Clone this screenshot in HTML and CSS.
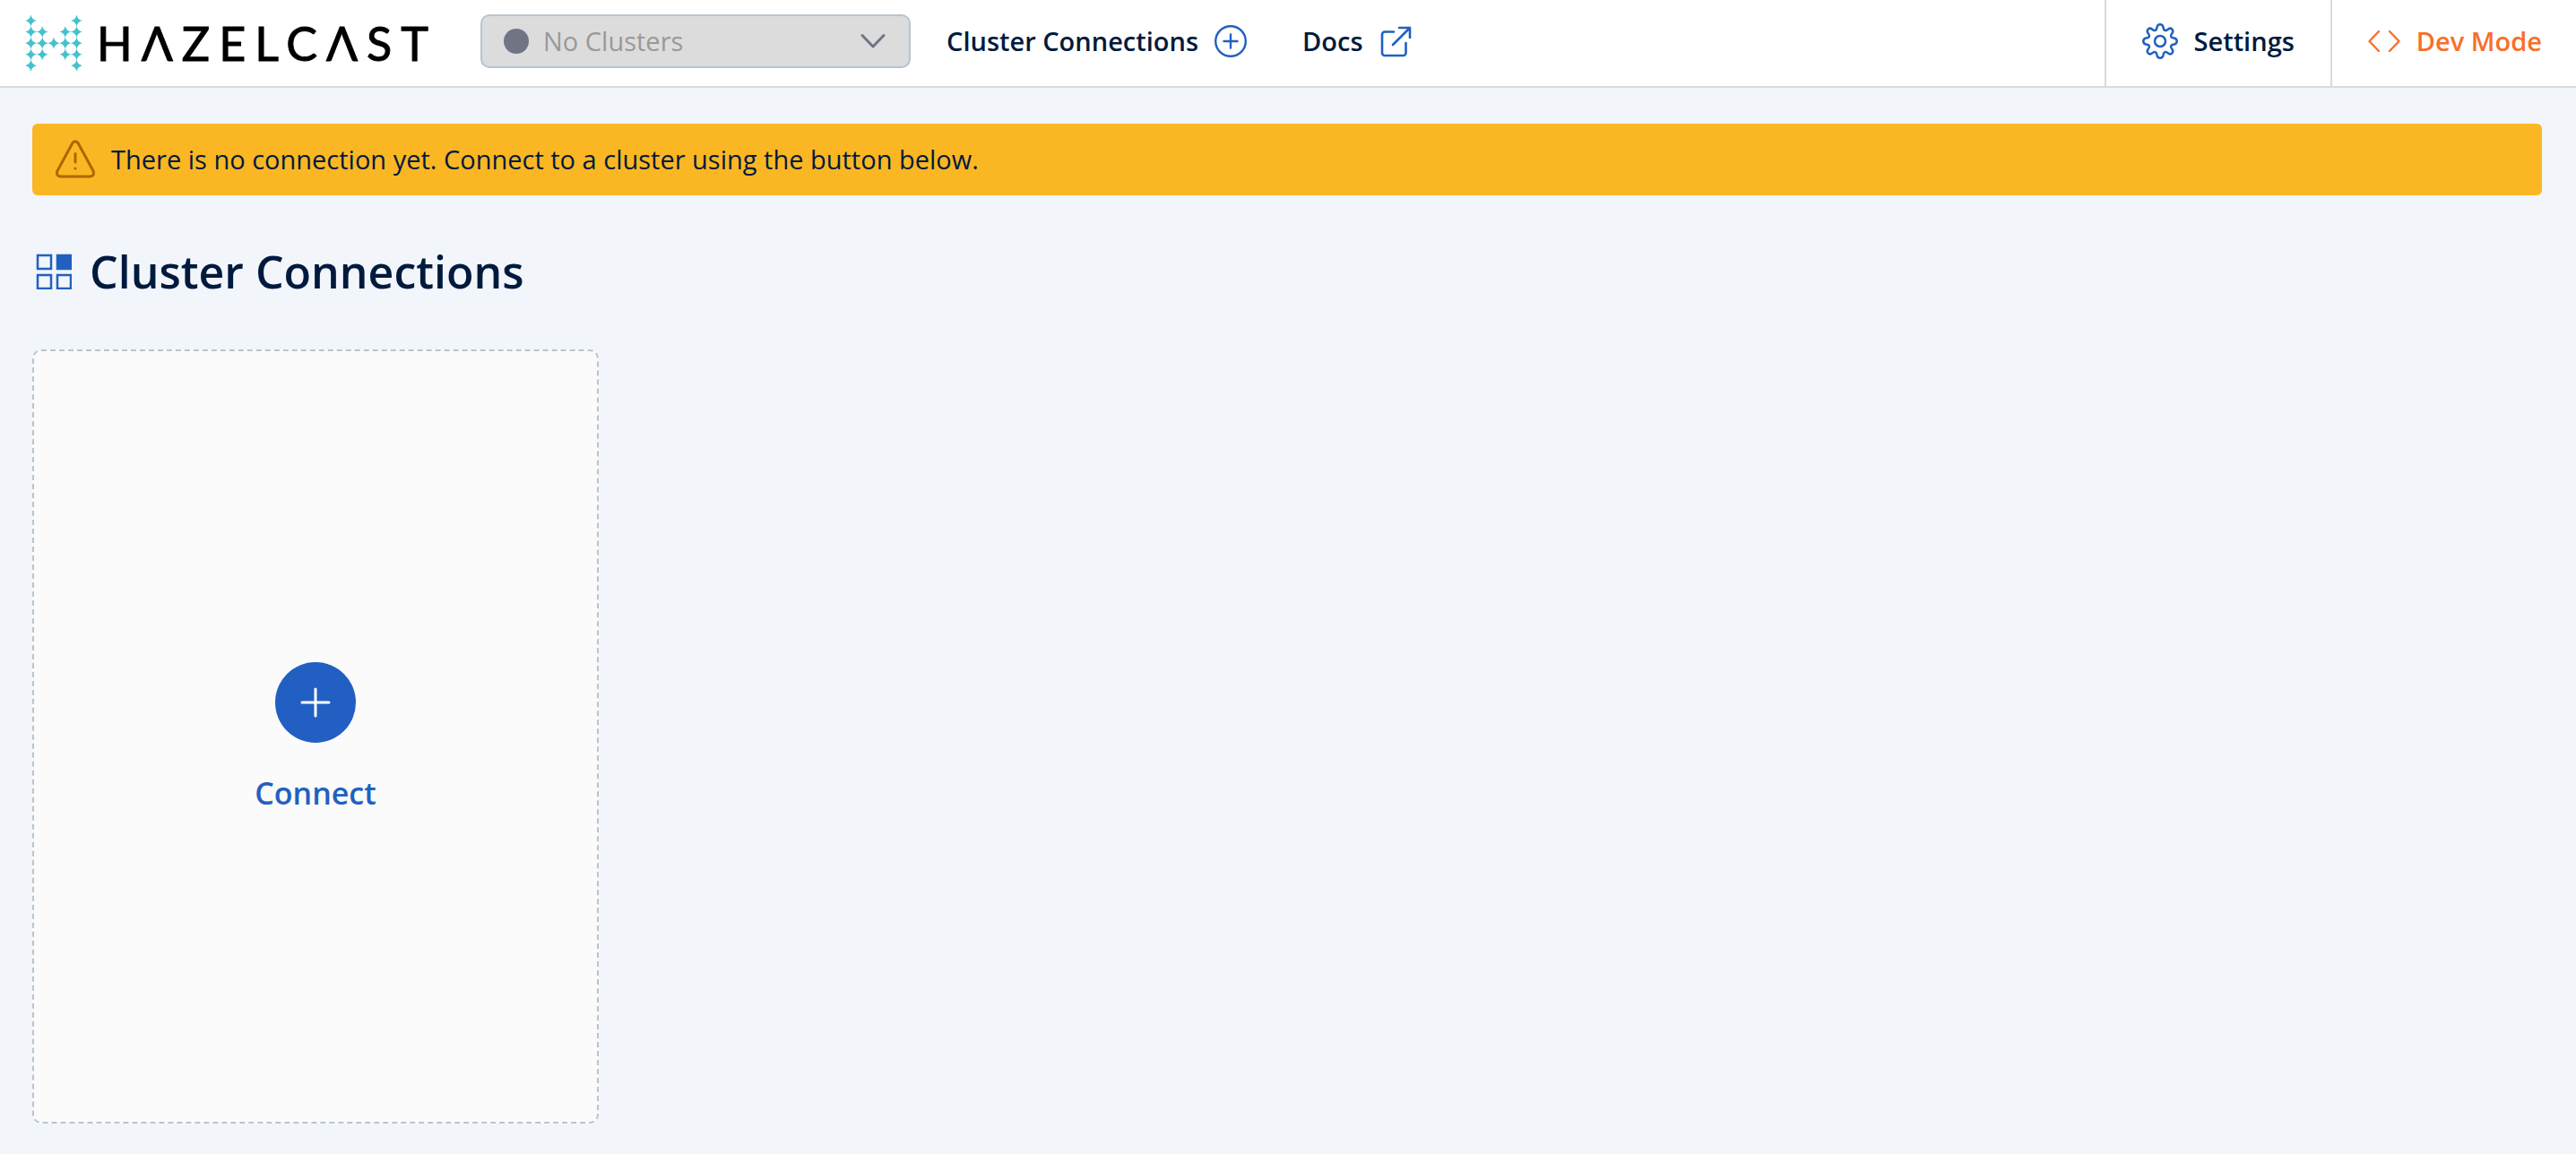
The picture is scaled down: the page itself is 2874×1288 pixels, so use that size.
FILE: index.html
```
<!DOCTYPE html>
<html lang="en">
<head>
  <meta charset="utf-8">
  <meta name="viewport" content="width=device-width, initial-scale=1">
  <title>Cluster Connections</title>
  <link rel="stylesheet" href="styles.css">
</head>
<body>
  <header class="topbar">
    <a class="logo" href="#">
      <svg class="logo-mark" viewBox="0 0 64 64" aria-hidden="true">
        <defs>
          <path id="star" d="M0-6.6C.8-2.8 2.8-.8 6.6 0C2.8.8.8 2.8 0 6.6C-.8 2.8-2.8.8-6.6 0C-2.8-.8-.8-2.8 0-6.6Z"/>
        </defs>
        <g class="logo-stars">
          <use href="#star" x="6.5" y="7"/><use href="#star" x="57.5" y="7"/>
          <use href="#star" x="6.5" y="19.5"/><use href="#star" x="19.2" y="19.5"/><use href="#star" x="44.8" y="19.5"/><use href="#star" x="57.5" y="19.5"/>
          <use href="#star" x="6.5" y="32.2"/><use href="#star" x="19.2" y="32.2"/><use href="#star" x="32" y="32.2"/><use href="#star" x="44.8" y="32.2"/><use href="#star" x="57.5" y="32.2"/>
          <use href="#star" x="6.5" y="44.8"/><use href="#star" x="19.2" y="44.8"/><use href="#star" x="44.8" y="44.8"/><use href="#star" x="57.5" y="44.8"/>
          <use href="#star" x="6.5" y="57.2"/><use href="#star" x="57.5" y="57.2"/>
        </g>
      </svg>
      <span class="logo-name">HΛZELCΛST</span>
    </a>

    <div class="cluster-picker">
      <span class="cluster-status"></span>
      <select class="cluster-select" aria-label="Cluster" disabled>
        <option>No Clusters</option>
      </select>
      <svg class="cluster-chevron" viewBox="0 0 28 18" aria-hidden="true"><path d="M2 2.500 14 15 26 2.500"/></svg>
    </div>

    <nav class="nav">
      <a class="nav-link" href="#">
        Cluster Connections
        <svg class="icon icon-add" viewBox="0 0 36 36" aria-hidden="true"><g stroke-width="2.4"><circle cx="18" cy="18" r="16.800"/><path d="M18 10.500v15M10.500 18h15"/></g></svg>
      </a>
      <a class="nav-link" href="#">
        Docs
        <svg class="icon icon-external" viewBox="0 0 36 36" aria-hidden="true"><path stroke-width="2.6" d="M16 7.500H6a3 3 0 0 0-3 3V31a3 3 0 0 0 3 3h20.500a3 3 0 0 0 3-3V20M22 3h12v11M34 3 15 22"/></svg>
      </a>
    </nav>

    <div class="tools">
      <a class="tool" href="#">
        <svg class="icon icon-gear" viewBox="0 0 40 40" aria-hidden="true">
          <g stroke-width="2.5">
            <circle cx="20" cy="20" r="6"/>
            <path d="M16.500 4.500C17.200.200 22.800.200 23.500 4.500C24 8.200 26 9 28.800 6.700C32.300 4 35.900 7.700 33.300 11.200C31 14 31.800 16 35.500 16.500C39.800 17.200 39.800 22.800 35.500 23.500C31.800 24 31 26 33.300 28.800C35.900 32.300 32.300 36 28.800 33.300C26 31 24 31.800 23.500 35.500C22.800 39.800 17.200 39.800 16.500 35.500C16 31.800 14 31 11.200 33.300C7.700 36 4.100 32.300 6.700 28.800C9 26 8.200 24 4.500 23.500C.200 22.800.200 17.200 4.500 16.500C8.200 16 9 14 6.700 11.200C4.100 7.700 7.700 4 11.200 6.700C14 9 16 8.200 16.500 4.500Z"/>
          </g>
        </svg>
        Settings
      </a>
      <a class="tool tool-dev" href="#">
        <svg class="icon" viewBox="0 0 36 36" aria-hidden="true"><path stroke-width="2.4" d="M12 7 1.500 18 12 29M24 7 34.500 18 24 29"/></svg>
        Dev Mode
      </a>
    </div>
  </header>

  <main class="page">
    <div class="alert" role="alert">
      <svg class="alert-icon" viewBox="0 0 44 44" aria-hidden="true"><path d="M18.600 4.200 2 34.800Q0 41 6.500 41H37.500Q44 41 42 34.800L25.400 4.200Q22-.500 18.600 4.200ZM22 15.500V25M22 31.900v.200"/></svg>
      There is no connection yet. Connect to a cluster using the button below.
    </div>

    <h1 class="title">
      <svg class="title-icon" viewBox="0 0 40 40" aria-hidden="true">
        <g stroke-width="2.5">
          <path d="M2 2h15v15H2ZM2 24h15v15H2ZM24 24h15v15H24Z"/>
          <path class="title-icon-fill" d="M24 2h15v15H24Z"/>
        </g>
      </svg>
      Cluster Connections
    </h1>

    <div class="clusters">
      <button class="connect" type="button">
        <span class="connect-circle">
          <svg class="connect-plus" viewBox="0 0 36 36" aria-hidden="true"><path d="M18 3v30M3 18h30"/></svg>
        </span>
        Connect
      </button>
    </div>
  </main>
</body>
</html>
```
FILE: styles.css
```
:root {
  --navy: #001a3d;
  --blue: #2160c2;
  --orange: #f96f28;
  --line: #d9dadc;
  --outline: #b8c4cf;
}

* {
  box-sizing: border-box;
}

body {
  margin: 0;
  min-height: 100vh;
  background: #f2f5fa;
  color: var(--navy);
  font-family: "Open Sans", "Noto Sans", sans-serif;
  font-size: 29px;
  line-height: 40px;
}

a {
  color: inherit;
  text-decoration: none;
}

svg {
  display: block;
  flex: none;
  fill: none;
  stroke: currentColor;
  stroke-width: 2;
  stroke-linecap: round;
  stroke-linejoin: round;
}

.topbar {
  display: flex;
  align-items: stretch;
  background: #fff;
  border-bottom: 2px solid var(--line);
  font-weight: 600;
}

.logo {
  display: flex;
  align-items: center;
  gap: 16px;
  width: 508px;
  padding-left: 28px;
  color: #000;
}

.logo-mark {
  width: 64px;
  height: 64px;
}

.logo-stars {
  fill: #46c1cb;
  stroke: none;
}

.logo-name {
  font-family: Lato, sans-serif;
  font-size: 52px;
  font-weight: 400;
  letter-spacing: 10px;
  -webkit-text-stroke: 1px currentColor;
}

.cluster-picker {
  position: relative;
  width: 480px;
  margin: 16px 40px 20px 28px;
}

.cluster-select {
  width: 100%;
  height: 60px;
  padding: 0 64px 0 68px;
  border: 2px solid var(--outline);
  border-radius: 10px;
  background: #dcdcdc;
  color: #999;
  font: inherit;
  font-weight: 400;
  appearance: none;
  opacity: 1;
}

.cluster-status {
  position: absolute;
  top: 16px;
  left: 26px;
  width: 28px;
  height: 28px;
  border-radius: 50%;
  background: #707484;
}

.cluster-chevron {
  position: absolute;
  top: 21px;
  right: 28px;
  width: 28px;
  height: 18px;
  color: #707484;
  stroke-width: 3;
}

.nav {
  display: flex;
  gap: 62px;
}

.nav-link,
.tool {
  display: flex;
  align-items: center;
  gap: 18px;
  padding-bottom: 4px;
}

.icon {
  width: 36px;
  height: 36px;
  color: var(--blue);
}

.icon-gear {
  width: 40px;
  height: 40px;
}

.tools {
  display: flex;
  margin-left: auto;
}

.tool {
  padding-left: 40px;
  padding-right: 40px;
  border-left: 2px solid var(--line);
}

.tool-dev {
  padding-right: 38px;
}

.tool-dev,
.tool-dev .icon {
  color: var(--orange);
}

.page {
  padding: 40px 38px 34px 36px;
}

.alert {
  display: flex;
  align-items: center;
  gap: 18px;
  padding: 20px 26px;
  border-radius: 6px;
  background: #fab723;
}

.alert-icon {
  width: 44px;
  height: 44px;
  margin: -2px 0;
  color: #b16500;
  stroke-width: 3;
}

.title {
  display: flex;
  align-items: center;
  gap: 20px;
  margin: 51px 0 53px 4px;
  font-size: 50px;
  font-weight: 600;
  line-height: 68px;
}

.title-icon {
  width: 40px;
  height: 40px;
  color: var(--blue);
  stroke-linejoin: miter;
}

.title-icon-fill {
  fill: currentColor;
}

.clusters {
  display: grid;
  grid-template-columns: repeat(auto-fill, 632px);
  gap: 40px;
}

.connect {
  display: flex;
  flex-direction: column;
  align-items: center;
  justify-content: center;
  gap: 34px;
  min-height: 864px;
  padding: 2px 0 0;
  border: 2px dashed var(--outline);
  border-radius: 10px;
  background: #fbfbfb;
  color: var(--blue);
  font: inherit;
  font-size: 34px;
  font-weight: 600;
  line-height: 44px;
}

.connect-circle {
  display: grid;
  place-items: center;
  width: 90px;
  height: 90px;
  border-radius: 50%;
  background: var(--blue);
  color: #fff;
}

.connect-plus {
  width: 36px;
  height: 36px;
  stroke-width: 3;
}
```
